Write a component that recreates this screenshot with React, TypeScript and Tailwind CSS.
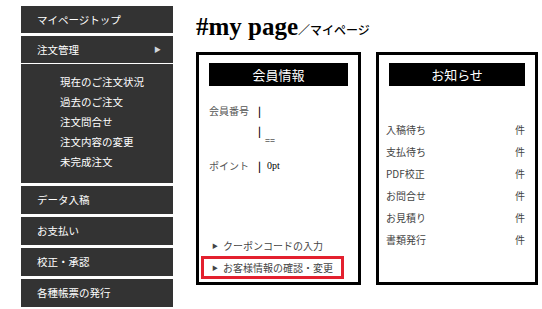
const jp = { fontFamily: '"Noto Sans CJK JP", "Noto Sans", sans-serif' };

const subItems = ["現在のご注文状況", "過去のご注文", "注文問合せ", "注文内容の変更", "未完成注文"];
const lowerItems = ["データ入稿", "お支払い", "校正・承認", "各種帳票の発行"];
const notices = ["入稿待ち", "支払待ち", "PDF校正", "お問合せ", "お見積り", "書類発行"];

function Sidebar() {
  return (
    <nav className="w-[152px] flex flex-col gap-[3px] pt-[6px] text-white text-[10.5px]" style={jp}>
      <div className="bg-[#333333] h-[27px] flex items-center pl-[16px]">マイページトップ</div>
      <div className="bg-[#333333] pb-[14px]">
        <div className="h-[28px] flex items-center justify-between pl-[16px] pr-[12px] border-b border-white">
          <span>注文管理</span>
          <span className="text-[7px] text-gray-300">▶</span>
        </div>
        <div className="flex flex-col gap-[6px] pt-[11px] pl-[39px]">
          {subItems.map((s) => (
            <div key={s} className="leading-[14px]">{s}</div>
          ))}
        </div>
      </div>
      {lowerItems.map((s) => (
        <div key={s} className="bg-[#333333] h-[28px] flex items-center pl-[16px]">{s}</div>
      ))}
      <div className="bg-[#333333] h-[4px]" />
    </nav>
  );
}

function BoxHeader({ title }: { title: string }) {
  return (
    <div className="bg-black text-white h-[23px] flex items-center justify-center text-[13px]" style={jp}>
      {title}
    </div>
  );
}

export default function App() {
  return (
    <div className="w-[542px] h-[309px] bg-white flex overflow-hidden">
      <div className="pl-[21px]">
        <Sidebar />
      </div>
      <main className="pl-[23px] pt-[8px]">
        <h1 className="h-[38px] flex items-baseline text-black">
          <span className="text-[25px] font-bold" style={{ fontFamily: '"Liberation Serif", serif' }}>#my page</span>
          <span className="text-[12px] font-medium" style={jp}>／マイページ</span>
        </h1>
        <div className="flex gap-[15px] mt-[6px]">
          <section className="w-[165px] h-[233px] border-[3px] border-black px-[10px] pt-[8px] flex flex-col">
            <BoxHeader title="会員情報" />
            <div className="text-[10px] text-[#555] pt-[16px]" style={jp}>
              <div className="flex items-center h-[16px]">
                <span className="w-[49px]">会員番号</span>
                <span className="text-black font-bold">|</span>
              </div>
              <div className="flex items-end h-[28px] pl-[49px]">
                <span className="text-black font-bold leading-[14px] mb-[8px]">|</span>
                <span className="text-black text-[9px] ml-[4px] leading-none pb-[1px]">==</span>
              </div>
              <div className="flex items-center h-[16px] mt-[11px]">
                <span className="w-[49px]">ポイント</span>
                <span className="text-black font-bold">|</span>
                <span className="text-black ml-[6px] text-[10px]" style={{ fontFamily: '"Liberation Serif", serif' }}>0pt</span>
              </div>
            </div>
            <div className="mt-auto pb-[3px] text-[10px] text-[#444]" style={jp}>
              <div className="flex items-center gap-[5px] h-[18px] pl-[3px]">
                <span className="text-[6px]">▶</span>
                <span>クーポンコードの入力</span>
              </div>
              <div className="flex items-center gap-[5px] h-[23px] mt-[2px] pl-[8px] border-[3px] border-[#e3202e] -ml-[8px] w-[143px]">
                <span className="text-[6px]">▶</span>
                <span>お客様情報の確認・変更</span>
              </div>
            </div>
          </section>
          <section className="w-[162px] h-[233px] border-[3px] border-black px-[10px] pt-[8px] flex flex-col">
            <BoxHeader title="お知らせ" />
            <div className="pt-[35px] -ml-[3px] flex flex-col gap-[6px] text-[10px] text-[#444]" style={jp}>
              {notices.map((n) => (
                <div key={n} className="flex justify-between h-[16px] items-center">
                  <span>{n}</span>
                  <span>件</span>
                </div>
              ))}
            </div>
          </section>
        </div>
      </main>
    </div>
  );
}
